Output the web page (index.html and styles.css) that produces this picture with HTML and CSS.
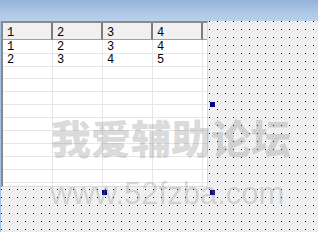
FILE: index.html
```html
<!DOCTYPE html>
<html>
<head>
<meta charset="utf-8">
<link rel="stylesheet" href="styles.css">
</head>
<body>
<div class="app">
  <div class="titlebar"></div>
  <div class="workspace">
    <div class="grid">
      <div class="row head">
        <div class="hc">1</div><div class="hc">2</div><div class="hc">3</div><div class="hc">4</div><div class="hc fill"></div>
      </div>
      <div class="row"><div class="c">1</div><div class="c">2</div><div class="c">3</div><div class="c">4</div><div class="c"></div></div>
      <div class="row"><div class="c">2</div><div class="c">3</div><div class="c">4</div><div class="c">5</div><div class="c"></div></div>
      <div class="row"><div class="c"></div><div class="c"></div><div class="c"></div><div class="c"></div><div class="c"></div></div>
      <div class="row"><div class="c"></div><div class="c"></div><div class="c"></div><div class="c"></div><div class="c"></div></div>
      <div class="row"><div class="c"></div><div class="c"></div><div class="c"></div><div class="c"></div><div class="c"></div></div>
      <div class="row"><div class="c"></div><div class="c"></div><div class="c"></div><div class="c"></div><div class="c"></div></div>
      <div class="row"><div class="c"></div><div class="c"></div><div class="c"></div><div class="c"></div><div class="c"></div></div>
      <div class="row"><div class="c"></div><div class="c"></div><div class="c"></div><div class="c"></div><div class="c"></div></div>
      <div class="row"><div class="c"></div><div class="c"></div><div class="c"></div><div class="c"></div><div class="c"></div></div>
      <div class="row"><div class="c"></div><div class="c"></div><div class="c"></div><div class="c"></div><div class="c"></div></div>
      <div class="row"><div class="c"></div><div class="c"></div><div class="c"></div><div class="c"></div><div class="c"></div></div>
      <div class="row"><div class="c"></div><div class="c"></div><div class="c"></div><div class="c"></div><div class="c"></div></div>
    </div>
  </div>
  <div class="handle h-right"></div>
  <div class="handle h-bottom"></div>
  <div class="handle h-corner"></div>
  <div class="watermark">
    <div class="wm-cn">我爱辅助论坛</div>
    <div class="wm-url">www.52fzba.com</div>
  </div>
</div>
</body>
</html>
```
FILE: styles.css
```css
html, body {
  margin: 0;
  padding: 0;
}
body {
  width: 318px;
  height: 232px;
  overflow: hidden;
  background: #f0f0f0;
}
.app {
  position: relative;
  width: 318px;
  height: 232px;
  display: flex;
  flex-direction: column;
}
.titlebar {
  height: 21px;
  flex: none;
  background: linear-gradient(180deg, #95b3d7 0%, #a9c4e4 50%, #b9d1ea 100%);
}
.workspace {
  flex: 1;
  border-left: 1px solid #a3c1e4;
  background-color: #000;
  background-image:
    linear-gradient(90deg, transparent 1px, #f0f0f0 1px),
    linear-gradient(180deg, transparent 1px, #f0f0f0 1px);
  background-size: 8px 8px;
  background-position: 0px 0px;
}
.grid {
  width: 207px;
  height: 166px;
  box-sizing: border-box;
  background: #fff;
  border-top: 2px solid #8a8a8a;
  border-left: 2px solid #8a8a8a;
  border-right: 1px solid #dcdcdc;
  border-bottom: 1px solid #dcdcdc;
  overflow: hidden;
  font-family: "Liberation Mono", "DejaVu Sans Mono", monospace;
  font-size: 12px;
  color: #000;
}
.row {
  display: grid;
  grid-template-columns: 50px 50px 50px 50px 1fr;
  height: 13px;
}
.row.head {
  height: 17px;
}
.hc {
  box-sizing: border-box;
  background: #f0f0f0;
  border-right: 2px solid #7c7c7c;
  border-bottom: 1px solid #a0a0a0;
  padding: 4px 0 0 4px;
  line-height: 12px;
}
.hc.fill {
  border-right: none;
}
.c {
  box-sizing: border-box;
  border-right: 1px solid #e6e6e6;
  border-bottom: 1px solid #e6e6e6;
  padding: 2px 0 0 4px;
  line-height: 11px;
}
.handle {
  position: absolute;
  width: 5px;
  height: 5px;
  background: #000080;
}
.h-right { left: 210px; top: 102px; }
.h-bottom { left: 102px; top: 190px; }
.h-corner { left: 210px; top: 190px; }
.watermark {
  position: absolute;
  left: 50px;
  top: 117px;
  display: flex;
  flex-direction: column;
  pointer-events: none;
}
.wm-cn {
  font-family: "Noto Sans CJK SC", sans-serif;
  font-weight: 900;
  font-size: 40px;
  line-height: 40px;
  color: rgba(128, 128, 128, 0.3);
  margin-left: 1px;
}
.wm-url {
  margin-top: 21px;
  font-family: "Liberation Sans", Arial, sans-serif;
  font-size: 31px;
  line-height: 31px;
  color: rgba(128, 128, 128, 0.28);
}
```
